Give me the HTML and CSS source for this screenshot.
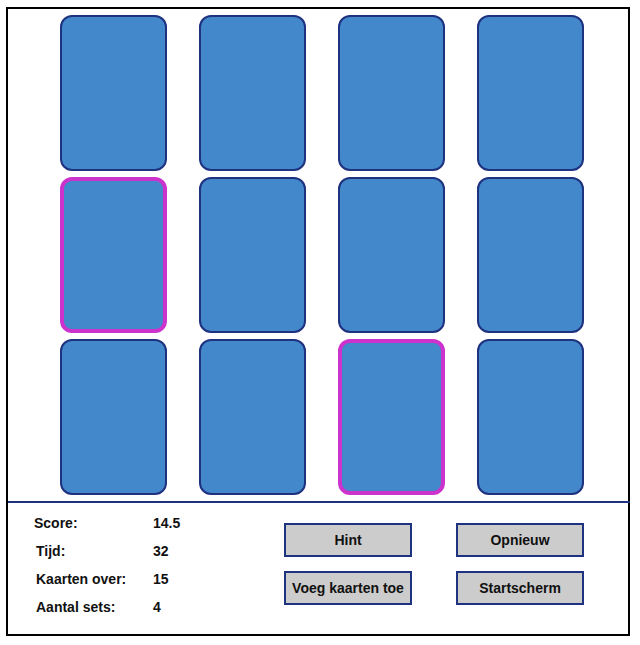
FILE: index.html
```html
<!DOCTYPE html>
<html lang="nl">
<head>
    <meta charset="UTF-8">
    <meta name="viewport" content="width=device-width, initial-scale=1.0">
    <title>Set</title>
    <link rel="stylesheet" href="styles.css">
</head>
<body>

    <div class="game">
        <!-- speelveld -->
        <div class="board">
            <div class="card"></div>
            <div class="card"></div>
            <div class="card"></div>
            <div class="card"></div>

            <div class="card selected"></div>
            <div class="card"></div>
            <div class="card"></div>
            <div class="card"></div>

            <div class="card"></div>
            <div class="card"></div>
            <div class="card selected"></div>
            <div class="card"></div>
        </div>

        <!-- score en knoppen -->
        <div class="panel">
            <div class="stats">
                <span class="label">Score:</span><span class="value">14.5</span>
                <span class="label">Tijd:</span><span class="value">32</span>
                <span class="label">Kaarten over:</span><span class="value">15</span>
                <span class="label">Aantal sets:</span><span class="value">4</span>
            </div>

            <div class="buttons">
                <button type="button">Hint</button>
                <button type="button">Opnieuw</button>
                <button type="button">Voeg kaarten toe</button>
                <button type="button">Startscherm</button>
            </div>
        </div>
    </div>

</body>
</html>
```

FILE: styles.css
```css
body {
    font-family: 'Liberation Sans', Arial, sans-serif;
    background-color: white;
    margin: 0;
    padding: 7px 0 0 6px;
}

.game {
    box-sizing: border-box;
    width: 624px;
    height: 629px;
    border: 2px solid black;
}

.board {
    display: grid;
    grid-template-columns: repeat(4, 107px);
    grid-template-rows: repeat(3, 156px);
    column-gap: 32px;
    row-gap: 6px;
    padding: 6px 0 0 52px;
    border-bottom: 2px solid #1e3280;
    padding-bottom: 6px;
    margin-right: -2px;
}

.card {
    box-sizing: border-box;
    background-color: #4388cb;
    border: 2px solid #1e3280;
    border-radius: 12px;
}

.card.selected {
    border: 4px solid #cc33cc;
}

.panel {
    display: flex;
    padding: 6px 0 0 26px;
}

.stats {
    width: 250px;
    display: grid;
    grid-template-columns: 119px auto;
    grid-auto-rows: 28px;
    align-items: center;
    font-size: 14px;
    font-weight: bold;
    color: #111;
}

.stats .label:not(:first-child) {
    padding-left: 2px;
}

.buttons {
    display: grid;
    grid-template-columns: repeat(2, 128px);
    grid-auto-rows: 34px;
    column-gap: 44px;
    row-gap: 14px;
    margin-top: 14px;
}

.buttons button {
    box-sizing: border-box;
    background-color: #cccccc;
    border: 2px solid #1e3280;
    border-radius: 0;
    padding: 0;
    font-family: 'Liberation Sans', Arial, sans-serif;
    font-size: 14px;
    font-weight: bold;
    color: #111;
    cursor: pointer;
}
```
